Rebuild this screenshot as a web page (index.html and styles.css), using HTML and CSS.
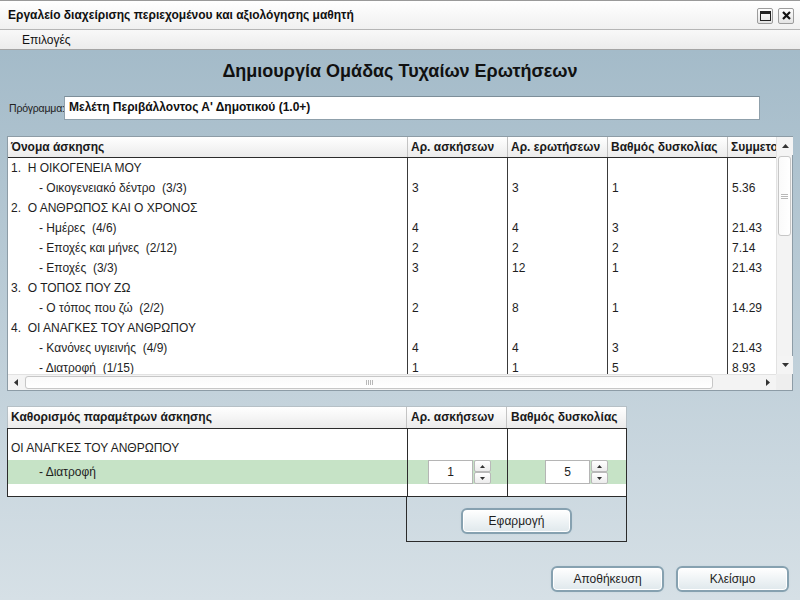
FILE: index.html
```html
<!DOCTYPE html>
<html lang="el">
<head>
<meta charset="utf-8">
<title>Εργαλείο διαχείρισης</title>
<link rel="stylesheet" href="styles.css">
</head>
<body>
<div class="window">
  <div class="titlebar">
    <span class="title">Εργαλείο διαχείρισης περιεχομένου και αξιολόγησης μαθητή</span>
    <div class="tb-buttons">
      <span class="tb-btn"><svg width="11" height="10" viewBox="0 0 11 10"><rect x="0.5" y="0.5" width="10" height="9" fill="none" stroke="#222"/><rect x="0" y="0" width="11" height="3" fill="#222"/></svg></span>
      <span class="tb-btn"><svg width="9" height="9" viewBox="0 0 9 9"><path d="M1 1 L8 8 M8 1 L1 8" stroke="#111" stroke-width="2.2"/></svg></span>
    </div>
  </div>
  <div class="menubar"><span class="menu">Επιλογές</span></div>
  <div class="main">
    <h1 class="heading">Δημιουργία Ομάδας Τυχαίων Ερωτήσεων</h1>
    <div class="program">
      <span class="prog-label">Πρόγραμμα:</span>
      <div class="prog-input">Μελέτη Περιβάλλοντος Α' Δημοτικού (1.0+)</div>
    </div>

    <div class="gtable">
      <div class="gview">
        <div class="ghead">
          <div class="c c1 hc">Όνομα άσκησης</div>
          <div class="c c2 hc">Αρ. ασκήσεων</div>
          <div class="c c3 hc">Αρ. ερωτήσεων</div>
          <div class="c c4 hc">Βαθμός δυσκολίας</div>
          <div class="c c5 hc">Συμμετοχή</div>
        </div>
        <div class="gbody">
          <div class="row"><div class="c c1">1.&nbsp; Η ΟΙΚΟΓΕΝΕΙΑ ΜΟΥ</div><div class="c c2"></div><div class="c c3"></div><div class="c c4"></div><div class="c c5"></div></div>
          <div class="row"><div class="c c1 sub">- Οικογενειακό δέντρο&nbsp; (3/3)</div><div class="c c2">3</div><div class="c c3">3</div><div class="c c4">1</div><div class="c c5">5.36</div></div>
          <div class="row"><div class="c c1">2.&nbsp; Ο ΑΝΘΡΩΠΟΣ ΚΑΙ Ο ΧΡΟΝΟΣ</div><div class="c c2"></div><div class="c c3"></div><div class="c c4"></div><div class="c c5"></div></div>
          <div class="row"><div class="c c1 sub">- Ημέρες&nbsp; (4/6)</div><div class="c c2">4</div><div class="c c3">4</div><div class="c c4">3</div><div class="c c5">21.43</div></div>
          <div class="row"><div class="c c1 sub">- Εποχές και μήνες&nbsp; (2/12)</div><div class="c c2">2</div><div class="c c3">2</div><div class="c c4">2</div><div class="c c5">7.14</div></div>
          <div class="row"><div class="c c1 sub">- Εποχές&nbsp; (3/3)</div><div class="c c2">3</div><div class="c c3">12</div><div class="c c4">1</div><div class="c c5">21.43</div></div>
          <div class="row"><div class="c c1">3.&nbsp; Ο ΤΟΠΟΣ ΠΟΥ ΖΩ</div><div class="c c2"></div><div class="c c3"></div><div class="c c4"></div><div class="c c5"></div></div>
          <div class="row"><div class="c c1 sub">- Ο τόπος που ζώ&nbsp; (2/2)</div><div class="c c2">2</div><div class="c c3">8</div><div class="c c4">1</div><div class="c c5">14.29</div></div>
          <div class="row"><div class="c c1">4.&nbsp; ΟΙ ΑΝΑΓΚΕΣ ΤΟΥ ΑΝΘΡΩΠΟΥ</div><div class="c c2"></div><div class="c c3"></div><div class="c c4"></div><div class="c c5"></div></div>
          <div class="row"><div class="c c1 sub">- Κανόνες υγιεινής&nbsp; (4/9)</div><div class="c c2">4</div><div class="c c3">4</div><div class="c c4">3</div><div class="c c5">21.43</div></div>
          <div class="row"><div class="c c1 sub">- Διατροφή&nbsp; (1/15)</div><div class="c c2">1</div><div class="c c3">1</div><div class="c c4">5</div><div class="c c5">8.93</div></div>
        </div>
      </div>
      <div class="vscroll">
        <div class="sbtn"><svg width="7" height="4" viewBox="0 0 7 4"><path d="M0 4 L3.5 0 L7 4Z" fill="#333"/></svg></div>
        <div class="vtrack">
          <div class="vthumb"><span class="grip-h"></span></div>
        </div>
        <div class="sbtn"><svg width="7" height="4" viewBox="0 0 7 4"><path d="M0 0 L3.5 4 L7 0Z" fill="#333"/></svg></div>
      </div>
      <div class="hscroll">
        <div class="sbtn"><svg width="4" height="7" viewBox="0 0 4 7"><path d="M4 0 L0 3.5 L4 7Z" fill="#333"/></svg></div>
        <div class="htrack">
          <div class="hthumb"><span class="grip-v"></span></div>
        </div>
        <div class="sbtn"><svg width="4" height="7" viewBox="0 0 4 7"><path d="M0 0 L4 3.5 L0 7Z" fill="#333"/></svg></div>
      </div>
      <div class="corner"></div>
    </div>

    <div class="params">
      <div class="phead">
        <div class="pc p1 hc">Καθορισμός παραμέτρων άσκησης</div>
        <div class="pc p2 hc">Αρ. ασκήσεων</div>
        <div class="pc p3 hc">Βαθμός δυσκολίας</div>
      </div>
      <div class="pbody">
        <div class="prow prow-top"><div class="pc p1">ΟΙ ΑΝΑΓΚΕΣ ΤΟΥ ΑΝΘΡΩΠΟΥ</div><div class="pc p2"></div><div class="pc p3"></div></div>
        <div class="prow prow-sel">
          <div class="pc p1 sub">- Διατροφή</div>
          <div class="pc p2 spin-cell">
            <div class="spinner"><div class="spin-val">1</div><div class="spin-btns"><span class="spin-b"><svg width="5" height="3" viewBox="0 0 5 3"><path d="M0 3 L2.5 0 L5 3Z" fill="#333"/></svg></span><span class="spin-b"><svg width="5" height="3" viewBox="0 0 5 3"><path d="M0 0 L2.5 3 L5 0Z" fill="#333"/></svg></span></div></div>
          </div>
          <div class="pc p3 spin-cell">
            <div class="spinner"><div class="spin-val">5</div><div class="spin-btns"><span class="spin-b"><svg width="5" height="3" viewBox="0 0 5 3"><path d="M0 3 L2.5 0 L5 3Z" fill="#333"/></svg></span><span class="spin-b"><svg width="5" height="3" viewBox="0 0 5 3"><path d="M0 0 L2.5 3 L5 0Z" fill="#333"/></svg></span></div></div>
          </div>
        </div>
        <div class="prow prow-end"><div class="pc p1"></div><div class="pc p2"></div><div class="pc p3"></div></div>
      </div>
      <div class="apply-row">
        <div class="apply-box"><button class="btn btn-apply">Εφαρμογή</button></div>
      </div>
    </div>

    <div class="actions">
      <button class="btn btn-act">Αποθήκευση</button>
      <button class="btn btn-act">Κλείσιμο</button>
    </div>
  </div>
</div>
</body>
</html>
```

FILE: styles.css
```css
* { box-sizing: border-box; }
html, body { margin: 0; padding: 0; }
body {
  width: 800px;
  height: 600px;
  overflow: hidden;
  font-family: "Liberation Sans", Arial, sans-serif;
  font-size: 12px;
  color: #1e1e1e;
}
.window {
  width: 800px;
  height: 600px;
  display: flex;
  flex-direction: column;
}
.titlebar {
  height: 30px;
  flex: none;
  display: flex;
  align-items: center;
  justify-content: space-between;
  padding: 0 6px 0 8px;
  background: linear-gradient(#ffffff, #f0f0f0);
  border-top: 1px solid #9a9a9a;
  border-bottom: 1px solid #b5b5b5;
}
.title {
  font-weight: bold;
  font-size: 12px;
  color: #111;
}
.tb-buttons { display: flex; gap: 5px; margin-top: 1px; }
.tb-btn {
  width: 16px;
  height: 16px;
  display: flex;
  align-items: center;
  justify-content: center;
  border: 1px solid #9c9c9c;
  border-radius: 2px;
  background: linear-gradient(#fdfdfd, #e4e4e4);
}
.menubar {
  height: 20px;
  flex: none;
  display: flex;
  align-items: center;
  padding-left: 22px;
  background: linear-gradient(#f8f8f8, #ececec);
  border-bottom: 1px solid #a4a4a4;
}
.menu { font-size: 12px; color: #111; }
.main {
  flex: 1;
  display: flex;
  flex-direction: column;
  padding: 0 7px;
  background: linear-gradient(#a4bbc9, #d6e0e6);
}
.heading {
  margin: 8px 0 0 0;
  height: 26px;
  line-height: 26px;
  text-align: center;
  font-size: 18px;
  font-weight: bold;
  color: #111;
}
.program {
  margin-top: 12px;
  display: flex;
  align-items: center;
  height: 24px;
}
.prog-label {
  flex: none;
  width: 57px;
  padding-left: 2px;
  white-space: nowrap;
  font-size: 10.5px;
  letter-spacing: -0.2px;
  color: #222;
}
.prog-input {
  flex: none;
  width: 696px;
  height: 24px;
  line-height: 21px;
  padding-left: 4px;
  background: #fff;
  border: 1px solid #8fa0ab;
  border-top-color: #7d8e99;
  font-weight: bold;
  color: #111;
}
/* big table */
.gtable {
  margin-top: 16px;
  width: 786px;
  height: 255px;
  border: 1px solid #8d9ca6;
  background: #fff;
  display: grid;
  grid-template-columns: 768px 16px;
  grid-template-rows: 237px 16px;
}
.gview { overflow: hidden; }
.ghead {
  display: flex;
  height: 21px;
  border-bottom: 1px solid #2b2b2b;
  width: 830px;
}
.hc {
  font-weight: bold;
  background: linear-gradient(#ffffff, #ebebeb);
  color: #1a1a1a;
  line-height: 20px;
}
.c {
  flex: none;
  white-space: nowrap;
  overflow: hidden;
  height: 20px;
  line-height: 20px;
  padding-left: 4px;
}
.c1 { width: 399px; padding-left: 3px; }
.c2 { width: 100px; }
.c3 { width: 100px; }
.c4 { width: 120px; }
.c5 { width: 111px; }
.ghead .c { border-right: 1px solid #c0c0c0; height: 20px; padding-left: 3px; }
.ghead .c1 { width: 400px; border-right-color: #c4c4c4; }
.gbody { width: 830px; }
.row { display: flex; height: 20px; }
.row .c2, .row .c3, .row .c4, .row .c5 { border-left: 1px solid #3a3a3a; }
.sub { padding-left: 31px; }

.vscroll {
  display: flex;
  flex-direction: column;
  background: #f3f3f3;
  border-left: 1px solid #e2e2e2;
}
.sbtn {
  flex: none;
  width: 16px;
  height: 18px;
  display: flex;
  align-items: center;
  justify-content: center;
  background: #f4f4f4;
}
.vtrack { flex: 1; padding: 1px 1px; }
.vthumb {
  height: 80px;
  border: 1px solid #c7c7c7;
  border-radius: 3px;
  background: linear-gradient(90deg, #fafafa, #ffffff);
  display: flex;
  align-items: center;
  justify-content: center;
}
.grip-h {
  width: 7px;
  height: 5px;
  border-top: 1px solid #b8b8b8;
  border-bottom: 1px solid #b8b8b8;
  background: linear-gradient(#fff 0 1px, #b8b8b8 1px 2px, #fff 2px);
  background-size: 100% 2px;
}
.hscroll {
  display: flex;
  background: #f3f3f3;
  border-top: 1px solid #e2e2e2;
}
.hscroll .sbtn { width: 16px; height: 15px; }
.htrack { flex: 1; padding: 1px 1px; }
.hthumb {
  width: 688px;
  height: 13px;
  border: 1px solid #c7c7c7;
  border-radius: 3px;
  background: linear-gradient(#fafafa, #ffffff);
  display: flex;
  align-items: center;
  justify-content: center;
}
.grip-v {
  width: 7px;
  height: 5px;
  background: repeating-linear-gradient(90deg, #b8b8b8 0 1px, transparent 1px 2px);
}
.corner { background: #eeeeee; }

/* params table */
.params {
  margin-top: 15px;
  width: 620px;
  display: flex;
  flex-direction: column;
}
.phead {
  display: flex;
  height: 22px;
  border: 1px solid #b6c0c6;
  border-bottom: none;
}
.pc {
  flex: none;
  white-space: nowrap;
  overflow: hidden;
  padding-left: 3px;
}
.p1 { width: 399px; }
.p2 { width: 100px; }
.p3 { width: 119px; }
.phead .pc { line-height: 21px; border-right: 1px solid #c4c4c4; }
.phead .p2, .phead .p3 { padding-left: 4px; }
.phead .p3 { border-right: none; }
.pbody {
  border: 1px solid #2b2b2b;
  background: #fff;
  padding-top: 8px;
}
.prow { display: flex; }
.prow .p2, .prow .p3 { border-left: 1px solid #2b2b2b; }
.prow-top .pc { height: 23px; line-height: 23px; }
.prow-sel { background: #c6e3c6; }
.prow-sel .pc { height: 24px; line-height: 24px; }
.prow-sel .sub { padding-left: 31px; }
.prow-end .pc { height: 12px; }
.pbody .prow:first-child .p2, .pbody .prow:first-child .p3 { margin-top: -8px; height: 31px; }
.spin-cell { display: flex; align-items: center; }
.p2.spin-cell { padding-left: 20px; }
.p3.spin-cell { padding-left: 37px; }
.spinner { display: flex; height: 24px; }
.spin-val {
  width: 45px;
  height: 24px;
  line-height: 22px;
  text-align: center;
  background: #fff;
  border: 1px solid #b5b5b5;
  font-size: 12px;
}
.spin-btns {
  width: 17px;
  height: 24px;
  display: flex;
  flex-direction: column;
  margin-left: 1px;
}
.spin-b {
  flex: 1;
  display: flex;
  align-items: center;
  justify-content: center;
  border: 1px solid #b9b9b9;
  border-radius: 2px;
  background: linear-gradient(#ffffff, #ececec);
}
.apply-row { display: flex; justify-content: flex-end; }
.apply-box {
  width: 221px;
  height: 45px;
  border: 1px solid #2b2b2b;
  border-top: none;
  display: flex;
  justify-content: center;
  padding-top: 11px;
}
.btn {
  font-family: "Liberation Sans", Arial, sans-serif;
  font-size: 12px;
  color: #1e1e1e;
  height: 26px;
  border: 2px solid #86a1b0;
  border-radius: 6px;
  background: linear-gradient(#ffffff, #dfe8ec);
  box-shadow: inset 0 0 0 1px #ffffff, 0 0 2px #c2d2da;
  padding: 0;
}
.btn-apply { width: 111px; }
.actions {
  margin-top: 24px;
  display: flex;
  justify-content: flex-end;
  gap: 12px;
  padding-right: 4px;
}
.btn-act { width: 113px; }
```
